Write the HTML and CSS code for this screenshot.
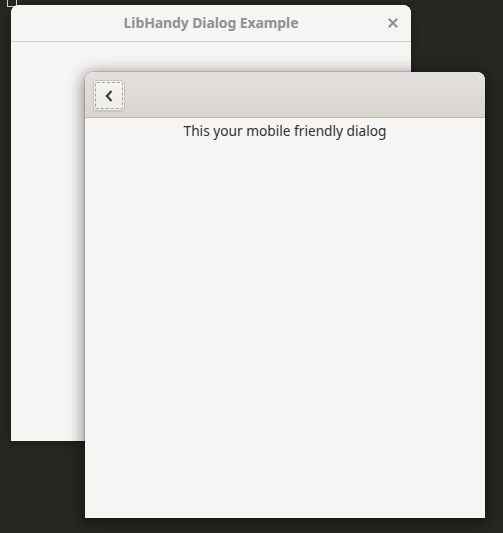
FILE: index.html
```html
<!DOCTYPE html>
<html>
<head>
<meta charset="utf-8">
<link rel="stylesheet" href="styles.css">
</head>
<body>
<div class="desktop">
  <div class="focus-mark"></div>
  <div class="window main">
    <div class="titlebar">
      <span class="title">LibHandy Dialog Example</span>
      <span class="close">
        <svg width="10" height="10" viewBox="0 0 10 10"><path d="M1.5 1.5L8.5 8.5M8.5 1.5L1.5 8.5" stroke="#8b8e8f" stroke-width="2" stroke-linecap="square"/></svg>
      </span>
    </div>
    <div class="body"></div>
  </div>
  <div class="window dialog">
    <div class="headerbar">
      <button class="back">
        <svg width="8" height="12" viewBox="0 0 8 12"><path d="M6.5 1L1.8 6L6.5 11" fill="none" stroke="#2e3436" stroke-width="2"/></svg>
      </button>
    </div>
    <div class="content">
      <p class="message">This your mobile friendly dialog</p>
    </div>
  </div>
</div>
</body>
</html>
```
FILE: styles.css
```css
html, body {
  margin: 0;
  padding: 0;
  width: 503px;
  height: 533px;
  overflow: hidden;
  background: #272721;
  font-family: "Noto Sans", "DejaVu Sans", sans-serif;
}
.desktop {
  position: relative;
  width: 503px;
  height: 533px;
}
.focus-mark {
  position: absolute;
  left: 7px;
  top: -2px;
  width: 8px;
  height: 7px;
  border: 1px solid #d8d6d2;
}
.window {
  position: absolute;
  display: flex;
  flex-direction: column;
  background: #f6f5f4;
  border-radius: 8px 8px 0 0;
}
.main {
  left: 11px;
  top: 5px;
  width: 400px;
  height: 436px;
  box-shadow: 0 2px 8px rgba(0,0,0,0.3);
}
.titlebar {
  position: relative;
  height: 36px;
  border-bottom: 1px solid #d4d1cd;
  display: flex;
  align-items: center;
  justify-content: center;
  border-radius: 8px 8px 0 0;
  background: #f6f5f4;
}
.title {
  font-weight: 700;
  font-size: 14px;
  color: #8f9192;
  letter-spacing: -0.1px;
  margin-top: -2px;
}
.close {
  position: absolute;
  right: 13px;
  top: 13px;
  width: 10px;
  height: 10px;
  display: flex;
}
.body {
  flex: 1;
}
.dialog {
  left: 85px;
  top: 72px;
  width: 400px;
  height: 446px;
  box-shadow: 0 3px 16px 2px rgba(0,0,0,0.45), 0 0 0 1px rgba(0,0,0,0.12);
}
.headerbar {
  height: 46px;
  box-sizing: border-box;
  border-bottom: 1px solid #bfb8b1;
  border-radius: 8px 8px 0 0;
  background: linear-gradient(to bottom, #e3e0dd, #d9d5d1);
  padding: 8px 0 0 8px;
  display: flex;
  align-items: flex-start;
}
.back {
  flex: none;
  width: 32px;
  height: 31px;
  margin: 0;
  padding: 0;
  box-sizing: border-box;
  border: 1px solid #c9c3be;
  border-radius: 4px;
  background: linear-gradient(to bottom, #f6f5f4, #eeecea);
  outline: 1px dashed #a3a19d;
  outline-offset: -3px;
  display: flex;
  align-items: center;
  justify-content: center;
  box-shadow: 0 1px 1px rgba(0,0,0,0.08);
}
.content {
  flex: 1;
  display: flex;
  flex-direction: column;
  align-items: center;
}
.message {
  margin: 3px 0 0 0;
  font-size: 13.7px;
  color: #2e3436;
  line-height: 20px;
}
```
